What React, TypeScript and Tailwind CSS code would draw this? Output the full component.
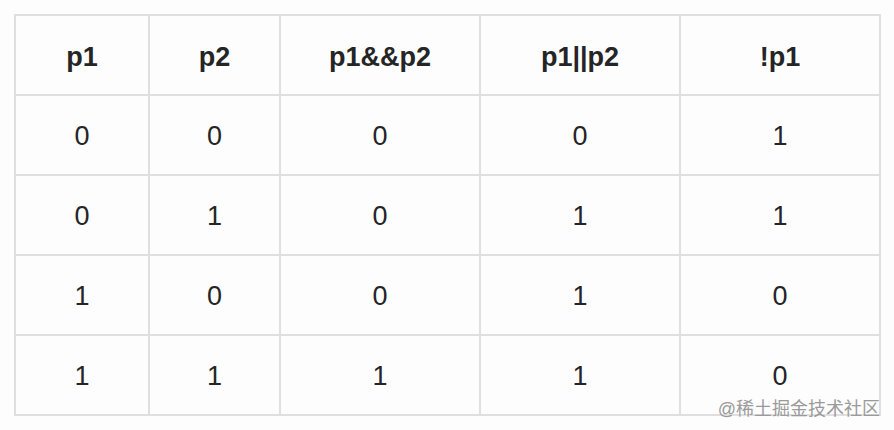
import React from 'react';

const headers = ['p1', 'p2', 'p1&&p2', 'p1||p2', '!p1'];
const rows = [
  [0, 0, 0, 0, 1],
  [0, 1, 0, 1, 1],
  [1, 0, 0, 1, 0],
  [1, 1, 1, 1, 0],
];
const widths = ['w-[134px]', 'w-[131px]', 'w-[200px]', 'w-[200px]', 'w-[200px]'];

const App = () => {
  return (
    <div className="w-[894px] h-[430px] bg-[#fdfdfd] pt-[14px] pl-[14px] relative overflow-hidden" style={{ fontFamily: '"Liberation Sans", Arial, sans-serif' }}>
      <table className="border-collapse table-fixed text-[#252525]">
        <thead>
          <tr className="h-[80px]">
            {headers.map((h, i) => (
              <th key={h} className={`${widths[i]} border-2 border-[#dfdfdf] text-[27px] font-bold text-center align-middle pt-[5px]`}>
                {h}
              </th>
            ))}
          </tr>
        </thead>
        <tbody>
          {rows.map((r, ri) => (
            <tr key={ri} className="h-[80px]">
              {r.map((v, ci) => (
                <td key={ci} className="border-2 border-[#dfdfdf] text-[27px] text-center align-middle pt-[2px]">
                  {v}
                </td>
              ))}
            </tr>
          ))}
        </tbody>
      </table>
      <div className="absolute right-[14px] bottom-[12px] text-[18px] leading-none text-[#9a9a9a]" style={{ fontFamily: '"Liberation Sans", "Noto Sans CJK SC", sans-serif' }}>
        @稀土掘金技术社区
      </div>
    </div>
  );
};

export default App;
